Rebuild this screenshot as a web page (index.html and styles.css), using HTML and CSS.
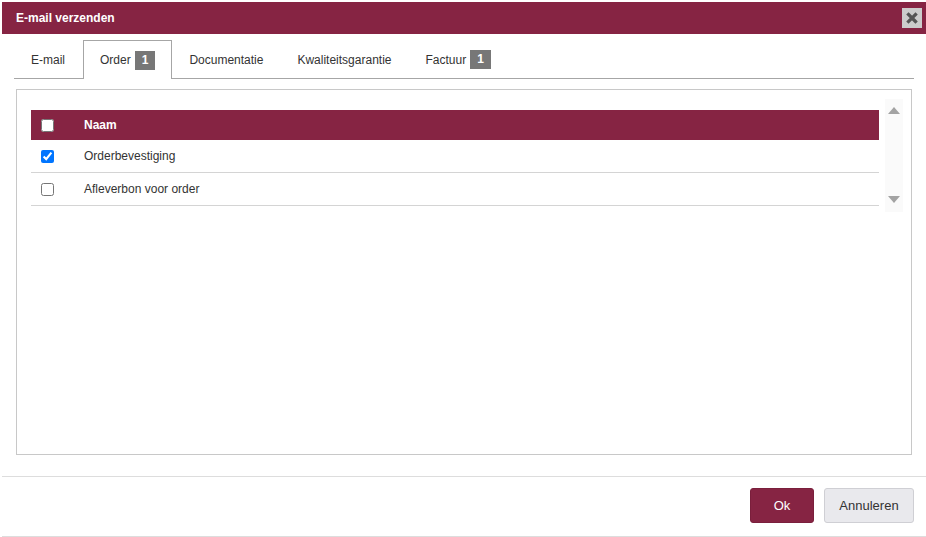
FILE: index.html
```html
<!DOCTYPE html>
<html lang="nl">
<head>
    <meta charset="UTF-8">
    <title>E-mail verzenden</title>
    <link rel="stylesheet" href="styles.css">
</head>
<body>
<div class="dialog">
    <div class="titlebar">
        <span class="title">E-mail verzenden</span>
        <button class="close-btn" type="button" aria-label="Sluiten">
            <svg width="20" height="20" viewBox="0 0 20 20">
                <path d="M6.5 6.5 L13.5 13.5 M13.5 6.5 L6.5 13.5" stroke="#555" stroke-width="3.2" stroke-linecap="square"/>
            </svg>
        </button>
    </div>
    <div class="dialog-body">
        <div class="tabs">
            <div class="tab">E-mail</div>
            <div class="tab active">Order <span class="badge">1</span></div>
            <div class="tab">Documentatie</div>
            <div class="tab">Kwaliteitsgarantie</div>
            <div class="tab">Factuur <span class="badge">1</span></div>
        </div>
        <div class="tab-content">
            <div class="grid-wrap">
                <div class="grid">
                    <div class="grid-row grid-head">
                        <div class="cell cell-check"><input type="checkbox"></div>
                        <div class="cell">Naam</div>
                    </div>
                    <div class="grid-row">
                        <div class="cell cell-check"><input type="checkbox" checked></div>
                        <div class="cell">Orderbevestiging</div>
                    </div>
                    <div class="grid-row">
                        <div class="cell cell-check"><input type="checkbox"></div>
                        <div class="cell">Afleverbon voor order</div>
                    </div>
                </div>
                <div class="scrollbar">
                    <span class="arrow-up"></span>
                    <span class="arrow-down"></span>
                </div>
            </div>
        </div>
    </div>
    <div class="footer">
        <button class="btn btn-primary" type="button">Ok</button>
        <button class="btn btn-default" type="button">Annuleren</button>
    </div>
</div>
</body>
</html>
```

FILE: styles.css
```css
body {
    font-family: "Liberation Sans", Arial, sans-serif;
    font-size: 12px;
    margin: 0;
    padding: 0;
    background-color: #fff;
    color: #333;
}
.dialog {
    padding: 2px 0 0 2px;
}
.titlebar {
    height: 32px;
    background-color: #862443;
    display: flex;
    align-items: center;
    justify-content: space-between;
    padding: 0 4px 0 14px;
}
.title {
    color: #fff;
    font-weight: bold;
    font-size: 12px;
}
.close-btn {
    width: 20px;
    height: 20px;
    padding: 0;
    border: 0;
    background-color: #ccc;
    display: flex;
}
.dialog-body {
    padding: 6px 12px 0 12px;
}
.tabs {
    display: flex;
    height: 38px;
    border-bottom: 1px solid #a6a6a6;
}
.tab {
    display: flex;
    align-items: center;
    padding: 0 16px;
    border: 1px solid transparent;
    border-bottom: 0;
    color: #333;
}
.tab.active {
    border-color: #a6a6a6;
    background-color: #fff;
    margin-left: 1px;
    margin-bottom: -1px;
    height: 38px;
}
.badge {
    display: inline-block;
    margin-left: 4px;
    background-color: #777;
    color: #fff;
    font-weight: bold;
    height: 19px;
    line-height: 19px;
    padding: 0 7px;
}
.tab-content {
    box-sizing: border-box;
    margin: 10px 2px 0 2px;
    height: 366px;
    border: 1px solid #c8c8c8;
    padding: 9px 8px 0 14px;
}
.grid-wrap {
    display: flex;
    gap: 6px;
}
.grid {
    flex: 1;
    padding-top: 11px;
}
.grid-row {
    display: grid;
    grid-template-columns: 53px 1fr;
    height: 32px;
    align-items: center;
    border-bottom: 1px solid #d4d4d4;
}
.grid-head {
    height: 30px;
    background-color: #862443;
    color: #fff;
    font-weight: bold;
    border-bottom: 0;
}
.cell-check {
    padding-left: 10px;
    display: flex;
    align-items: center;
}
.cell-check input {
    margin: 0;
    width: 13px;
    height: 13px;
}
.scrollbar {
    width: 18px;
    height: 113px;
    background-color: #fafafa;
    position: relative;
}
.arrow-up, .arrow-down {
    position: absolute;
    left: 3px;
    width: 0;
    height: 0;
    border-left: 6.5px solid transparent;
    border-right: 6.5px solid transparent;
}
.arrow-up {
    top: 8px;
    border-bottom: 7px solid #a3a3a3;
}
.arrow-down {
    bottom: 9px;
    border-top: 7px solid #a3a3a3;
}
.footer {
    margin-top: 21px;
    border-top: 1px solid #ddd;
    border-bottom: 1px solid #ddd;
    padding: 11px 12px 13px 0;
    display: flex;
    justify-content: flex-end;
    gap: 10px;
}
.btn {
    font-family: "Liberation Sans", Arial, sans-serif;
    font-size: 13px;
    height: 35px;
    min-width: 64px;
    padding: 0 14px;
    border-radius: 3px;
    cursor: pointer;
}
.btn-primary {
    background-color: #862443;
    border: 1px solid #7a1f3c;
    color: #fff;
}
.btn-default {
    background-color: #e9e9ed;
    border: 1px solid #cfcfd4;
    color: #333;
    min-width: 90px;
}
```
